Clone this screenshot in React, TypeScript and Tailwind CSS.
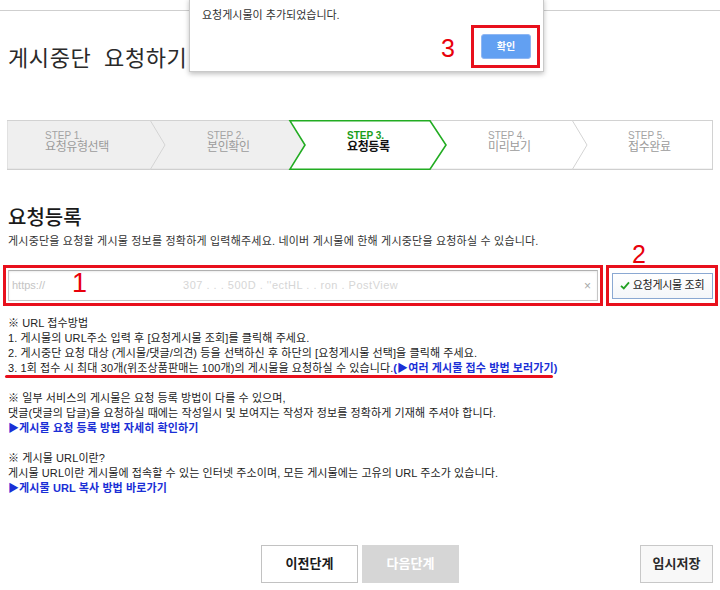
import React from 'react';

const STEPS = [
  { no: 'STEP 1.', label: '요청유형선택', pl: 'pl-[38px]', w: 'w-[143px]' },
  { no: 'STEP 2.', label: '본인확인', pl: 'pl-[57px]', w: 'w-[140px]' },
  { no: 'STEP 3.', label: '요청등록', pl: 'pl-[57px]', w: 'w-[140px]', active: true },
  { no: 'STEP 4.', label: '미리보기', pl: 'pl-[58px]', w: 'w-[142px]' },
  { no: 'STEP 5.', label: '접수완료', pl: 'pl-[56px]', w: 'w-[141px]' },
];

// 단계 표시 바
function Steps() {
  return (
    <div className="relative mx-[7px] mt-[46px] h-[50px] w-[706px]">
      <svg className="absolute inset-0" width="706" height="50" viewBox="0 0 706 50">
        <rect x="0.5" y="0.5" width="705" height="49" fill="#fff" stroke="#d2d2d2" />
        <polygon points="0.5,0.5 283,0.5 298,25 283,49.5 0.5,49.5" fill="#efefef" />
        <line x1="0" y1="49.5" x2="706" y2="49.5" stroke="#cfcfcf" strokeWidth="1.5" />
        <line x1="0" y1="0.5" x2="706" y2="0.5" stroke="#d2d2d2" />
        <polyline points="143,0 158,25 143,50" fill="none" stroke="#d4d4d4" />
        <polyline points="565,0 580,25 565,50" fill="none" stroke="#d4d4d4" />
        <polygon
          points="283,0.8 423,0.8 439,25 423,49.2 283,49.2 298,25"
          fill="#fff"
          stroke="#22ac22"
          strokeWidth="1.6"
        />
      </svg>
      <div className="relative flex h-full">
        {STEPS.map( ( s ) => (
          <div key={s.no} className={`${s.w} ${s.pl} flex flex-col pt-[11px]`}>
            <span className={`text-[10px] leading-[10px] ${s.active ? 'font-bold text-[#1a9e1a]' : 'text-[#a3a3a3]'}`}>
              {s.no}
            </span>
            <span className={`text-[12px] leading-[13px] tracking-[-0.4px] ${s.active ? 'font-bold text-[#111]' : 'text-[#9b9b9b]'}`}>
              {s.label}
            </span>
          </div>
        ) )}
      </div>
    </div>
  );
}

export default function App() {
  return (
    <div className="relative h-[590px] w-[720px] overflow-hidden bg-white font-['Liberation_Sans','Noto_Sans_CJK_KR',sans-serif] text-[#222]">
      <div className="h-[11px] border-b border-[#cfcfcf]" />

      <h1 className="ml-[8px] mt-[33px] text-[22px] font-normal leading-[30px] tracking-[0.6px] text-[#2a2a2a] [word-spacing:6px]">게시중단 요청하기</h1>

      <Steps />

      <h2 className="ml-[8px] mt-[34px] text-[20px] font-medium leading-[28px] text-[#1a1a1a]">요청등록</h2>
      <p className="ml-[8px] mt-[1px] text-[11px] leading-[16px] tracking-[0.2px] text-[#333]">
        게시중단을 요청할 게시물 정보를 정확하게 입력해주세요. 네이버 게시물에 한해 게시중단을 요청하실 수 있습니다.
      </p>

      {/* URL 입력 */}
      <div className="ml-[3px] mt-[16px] flex h-[41px] gap-[3px]">
        <div className="w-[600px] border-[3px] border-[#e8101c] p-[2px]">
          <div className="flex h-full items-center border border-[#c6c6c6] border-t-[#b0b0b0] bg-white pl-[3px] pr-[6px] text-[11px] shadow-[inset_0_1px_2px_rgba(0,0,0,0.08)]">
            <span className="text-[#c4c4c4]">https://</span>
            <span className="ml-[138px] tracking-[0.5px] text-[#d6d6d6]">307 . . . 500D . ''ectHL . . ron . PostView</span>
            <span className="ml-auto text-[12px] text-[#a8a8a8]">×</span>
          </div>
        </div>
        <div className="flex w-[112px] items-center justify-center border-[3px] border-[#e8101c]">
          <button className="flex h-[26px] w-[101px] items-center justify-center gap-[3px] border border-[#8aa8d2] bg-gradient-to-b from-white to-[#f4f6f9] text-[11px] tracking-[-0.3px] text-[#222]">
            <svg width="10" height="9" viewBox="0 0 10 9">
              <path d="M1 4.8 L3.8 7.4 L9 1.4" fill="none" stroke="#22a022" strokeWidth="1.8" />
            </svg>
            요청게시물 조회
          </button>
        </div>
      </div>

      {/* 안내 */}
      <div className="ml-[8px] mt-[10px] text-[11px] leading-[15px] tracking-[0.1px] text-[#222]">
        <p>※ URL 접수방법</p>
        <p>1. 게시물의 URL주소 입력 후 [요청게시물 조회]를 클릭해 주세요.</p>
        <p>2. 게시중단 요청 대상 (게시물/댓글/의견) 등을 선택하신 후 하단의 [요청게시물 선택]을 클릭해 주세요.</p>
        <p>
          3. 1회 접수 시 최대 30개(위조상품판매는 100개)의 게시물을 요청하실 수 있습니다.
          <span className="font-bold text-[#1a2fd6]">(▶여러 게시물 접수 방법 보러가기)</span>
        </p>

        <p className="mt-[15px]">※ 일부 서비스의 게시물은 요청 등록 방법이 다를 수 있으며,</p>
        <p>댓글(댓글의 답글)을 요청하실 때에는 작성일시 및 보여지는 작성자 정보를 정확하게 기재해 주셔야 합니다.</p>
        <p className="font-bold text-[#1a2fd6]">▶게시물 요청 등록 방법 자세히 확인하기</p>

        <p className="mt-[15px]">※ 게시물 URL이란?</p>
        <p>게시물 URL이란 게시물에 접속할 수 있는 인터넷 주소이며, 모든 게시물에는 고유의 URL 주소가 있습니다.</p>
        <p className="font-bold text-[#1a2fd6]">▶게시물 URL 복사 방법 바로가기</p>
      </div>

      {/* 하단 버튼 */}
      <div className="mt-[49px] flex pl-[261px] pr-[7px]">
        <button className="h-[38px] w-[97px] border border-[#c2c2c2] bg-white text-[13px] font-bold text-[#1a1a1a]">이전단계</button>
        <button className="ml-[4px] h-[38px] w-[97px] bg-[#d6d6d6] text-[13px] font-bold text-white">다음단계</button>
        <button className="ml-auto h-[38px] w-[73px] border border-[#c8c8c8] bg-[#f8f8f8] text-[13px] font-bold text-[#2a2a2a]">임시저장</button>
      </div>

      {/* 알림창 */}
      <div className="absolute left-[189px] top-[-2px] flex h-[74px] w-[355px] flex-col border border-[#c9c9c9] bg-white shadow-[0_2px_5px_rgba(0,0,0,0.25)]">
        <p className="ml-[12px] mt-[8px] text-[11px] leading-[16px] text-[#333]">요청게시물이 추가되었습니다.</p>
        <div className="mr-[12px] mt-[11px] flex justify-end">
          <button className="h-[25px] w-[50px] rounded-[3px] border border-[#8fb7f3] bg-[#62a0f2] text-[10px] font-bold text-white">확인</button>
        </div>
      </div>

      {/* 표시 */}
      <div className="absolute left-[471px] top-[25px] h-[43px] w-[69px] border-[3px] border-[#e8101c]" />
      <div className="absolute left-[441px] top-[36px] text-[25px] leading-none text-[#e8000b]">3</div>
      <div className="absolute left-[632px] top-[242px] text-[25px] leading-none text-[#e8000b]">2</div>
      <div className="absolute left-[72px] top-[270px] text-[27px] leading-none text-[#e8000b]">1</div>
      <div className="absolute left-[5px] top-[375px] h-[3px] w-[548px] rounded-full bg-[#e8101c]" />
    </div>
  );
}
